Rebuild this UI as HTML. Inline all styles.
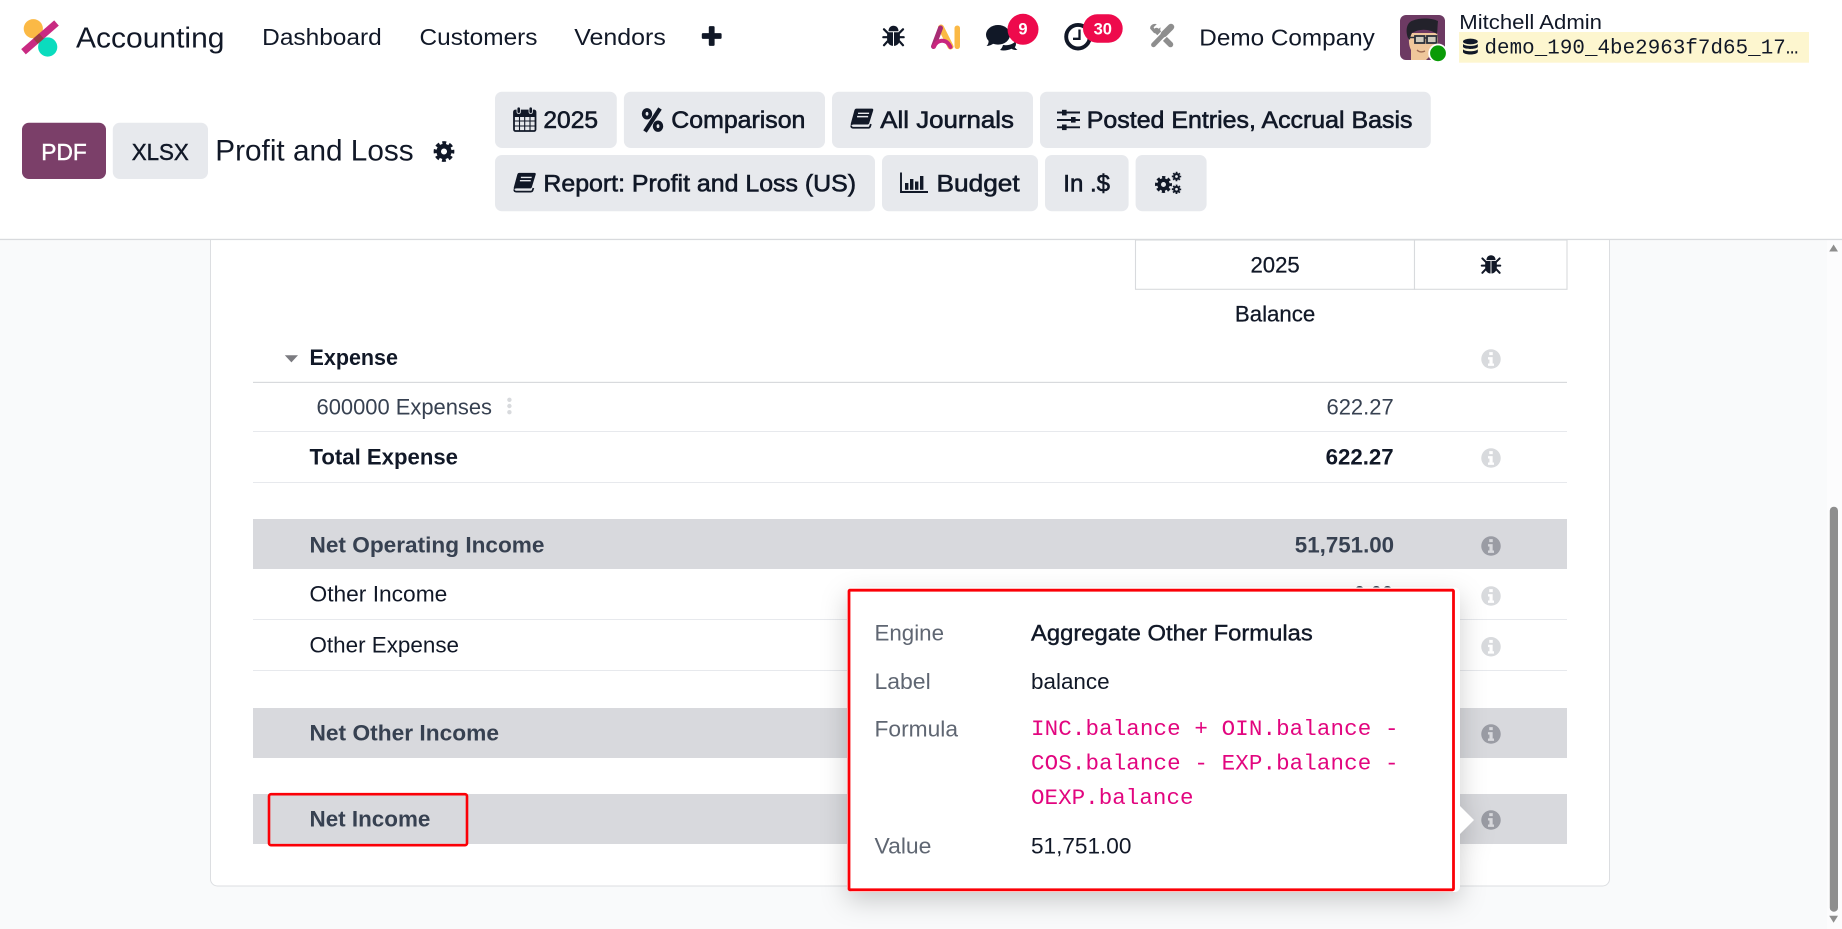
<!DOCTYPE html>
<html lang="en">
<head>
<meta charset="utf-8">
<title>Profit and Loss</title>
<style>
html,body{margin:0;padding:0;width:1842px;height:929px;overflow:hidden;background:#fff}
svg{display:block;position:absolute;left:0;top:0}
text{font-family:"Liberation Sans",sans-serif;fill:#111827;white-space:pre}
.nav{font-size:23.5px;fill:#111827}
.btn{font-size:24px;fill:#111827;stroke:#111827;stroke-width:.6px}
.t{font-size:22px;fill:#111827}
.tm{font-size:22px;fill:#111827;stroke:#111827;stroke-width:.25px}
.n{font-size:22px;fill:#374151}
.b{font-size:22px;font-weight:700;fill:#111827}
.bb{font-size:22px;font-weight:700;fill:#374151}
.lab{font-size:22px;fill:#5f6672}
.code{font-family:"Liberation Mono",monospace;font-size:22.5px;fill:#e2057f}
.badge{font-size:16.5px;font-weight:700;fill:#fff}
</style>
</head>
<body>
<svg width="1842" height="929" viewBox="0 0 1842 929" xmlns="http://www.w3.org/2000/svg">
<defs>
<symbol id="bug" viewBox="0 0 22 22" overflow="visible">
  <path d="M6 6.2C6 2.8 8.2.8 11 .8s5 2 5 5.4z" fill="#111827"/>
  <path d="M4.6 7.2h5.9v13.7C7 20.7 4.6 18 4.6 14zM11.500 7.2h5.900V14c0 4-2.400 6.700-5.900 6.900z" fill="#111827"/>
  <path d="M1.500 4.300 5 7.800M20.500 4.300 17 7.800M.8 12.200H5M21.200 12.200H17M1.500 20.200 5 16.400M20.500 20.200 17 16.400" stroke="#111827" stroke-width="2.200" fill="none" stroke-linecap="round"/>
</symbol>
<symbol id="info" viewBox="0 0 20 20" overflow="visible">
  <path fill-rule="evenodd" d="M10 0a10 10 0 1 1 0 20a10 10 0 1 1 0-20zM8.2 2.9v3.1h3.6V2.9zM6.9 8v2.4h1.5v4.2H6.9V17h6.2v-2.4h-1.4V8z"/>
</symbol>
<symbol id="book" viewBox="0 0 24 21" overflow="visible">
  <path d="M6.500.4H22.500C23.500.4 24 1.200 23.700 2.200L19.600 15.400C19.300 16.300 18.800 16.600 18 16.600H4C2.500 16.600 1.500 17 1 18C.6 16.500.8 15.500 1.200 14.300L4.500 2.200C4.800 1 5.500.4 6.500.4z" fill="#111827"/>
  <path d="M1.400 17.800C1 19.300 2 20 3.500 20H18.600C19.600 20 20.200 19.500 20.500 18.600L21.300 16.200" fill="none" stroke="#111827" stroke-width="1.800"/>
  <path d="M8.200 5.200H19.500M7.200 8.600H18.500" stroke="#e7e9ed" stroke-width="1.500"/>
</symbol>
<symbol id="gear" viewBox="-12 -12 24 24" overflow="visible">
  <circle r="5.800" fill="none" stroke="#111827" stroke-width="5"/>
  <circle r="9.400" fill="none" stroke="#111827" stroke-width="3.800" stroke-dasharray="4.200 3.180" stroke-dashoffset="2.100"/>
</symbol>
</defs>

<!-- ===== page background ===== -->
<rect x="0" y="0" width="1842" height="929" fill="#f9fafb"/>
<rect x="1827" y="240" width="15" height="689" fill="#fcfcfd"/>

<!-- ===== report card ===== -->
<rect x="210.500" y="180" width="1399" height="706" rx="7" fill="#fff" stroke="#dcdee1" stroke-width="1"/>

<!-- header cells -->
<rect x="1135.500" y="240" width="279" height="49.300" fill="#fff" stroke="#d8dadd" stroke-width="1.100"/>
<rect x="1414.500" y="240" width="152.500" height="49.300" fill="#fff" stroke="#d8dadd" stroke-width="1.100"/>
<text class="tm" x="1250.500" y="272.300" textLength="49.200" lengthAdjust="spacingAndGlyphs">2025</text>
<use href="#bug" x="1481" y="254.500" width="20" height="20"/>
<text class="tm" x="1234.900" y="321.700" textLength="80.400" lengthAdjust="spacingAndGlyphs">Balance</text>

<!-- Expense -->
<path d="M284.800 355.200H298L291.400 362.400z" fill="#7b7b80"/>
<text class="b" x="309.500" y="365" textLength="88.500" lengthAdjust="spacingAndGlyphs">Expense</text>
<use href="#info" x="1481" y="349.300" width="20" height="19.500" fill="#d8dadd"/>
<rect x="253" y="381.800" width="1314" height="1.200" fill="#d8dadd"/>

<text class="n" x="316.500" y="414.300" textLength="175.500" lengthAdjust="spacingAndGlyphs">600000 Expenses</text>
<circle cx="509.400" cy="399.800" r="2.200" fill="#d8dadd"/>
<circle cx="509.400" cy="406" r="2.200" fill="#d8dadd"/>
<circle cx="509.400" cy="412.200" r="2.200" fill="#d8dadd"/>
<text class="n" x="1326.500" y="414.300" textLength="67.200" lengthAdjust="spacingAndGlyphs">622.27</text>
<rect x="253" y="431" width="1314" height="1" fill="#e7e9ed"/>

<text class="b" x="309.500" y="464.300" textLength="148.500" lengthAdjust="spacingAndGlyphs">Total Expense</text>
<text class="b" x="1325.600" y="464.300" textLength="68.100" lengthAdjust="spacingAndGlyphs">622.27</text>
<use href="#info" x="1481" y="448.300" width="20" height="19.500" fill="#d8dadd"/>
<rect x="253" y="482" width="1314" height="1" fill="#e7e9ed"/>

<!-- Net Operating Income -->
<rect x="253" y="519" width="1314" height="50" fill="#d8d9dd"/>
<text class="bb" x="309.500" y="552.300" textLength="235" lengthAdjust="spacingAndGlyphs">Net Operating Income</text>
<text class="bb" x="1294.800" y="552.300" textLength="99.300" lengthAdjust="spacingAndGlyphs">51,751.00</text>
<use href="#info" x="1481" y="536.300" width="20" height="19.500" fill="#9a9ca4"/>

<!-- Other Income -->
<text class="t" x="309.500" y="601.700" textLength="137.800" lengthAdjust="spacingAndGlyphs">Other Income</text>
<text class="n" x="1354" y="601.700" textLength="39" lengthAdjust="spacingAndGlyphs">0.00</text>
<use href="#info" x="1481" y="586.300" width="20" height="19.500" fill="#d8dadd"/>
<rect x="253" y="619" width="1314" height="1" fill="#e7e9ed"/>

<!-- Other Expense -->
<text class="t" x="309.500" y="652.700" textLength="149.500" lengthAdjust="spacingAndGlyphs">Other Expense</text>
<use href="#info" x="1481" y="637" width="20" height="19.500" fill="#d8dadd"/>
<rect x="253" y="670" width="1314" height="1" fill="#e7e9ed"/>

<!-- Net Other Income -->
<rect x="253" y="708" width="1314" height="50" fill="#d8d9dd"/>
<text class="bb" x="309.500" y="740.700" textLength="189.500" lengthAdjust="spacingAndGlyphs">Net Other Income</text>
<use href="#info" x="1481" y="724.300" width="20" height="19.500" fill="#9a9ca4"/>

<!-- Net Income -->
<rect x="253" y="794" width="1314" height="50" fill="#d8d9dd"/>
<text class="bb" x="309.500" y="826.700" textLength="120.900" lengthAdjust="spacingAndGlyphs">Net Income</text>
<use href="#info" x="1481" y="810.300" width="20" height="19.500" fill="#9a9ca4"/>
<rect x="269" y="794.200" width="198" height="51" rx="2" fill="none" stroke="#fb0007" stroke-width="2.600"/>

<!-- ===== popover ===== -->
<g style="filter:drop-shadow(0 9px 13px rgba(0,0,0,.19))">
  <path d="M852 587.500H1455a5 5 0 0 1 5 5V806L1474 820L1460 834V887a5 5 0 0 1-5 5H852a5 5 0 0 1-5-5V592.500a5 5 0 0 1 5-5z" fill="#fff"/>
</g>
<rect x="849" y="590.200" width="604.500" height="299.600" rx="1" fill="none" stroke="#fb0007" stroke-width="2.800"/>

<text class="lab" x="874.500" y="640.700" textLength="69.500" lengthAdjust="spacingAndGlyphs">Engine</text>
<text class="t" x="1031" y="640.700" textLength="281.800" lengthAdjust="spacingAndGlyphs" style="stroke:#111827;stroke-width:.4px">Aggregate Other Formulas</text>
<text class="lab" x="874.500" y="689" textLength="56.200" lengthAdjust="spacingAndGlyphs">Label</text>
<text class="t" x="1031" y="689" textLength="78.600" lengthAdjust="spacingAndGlyphs">balance</text>
<text class="lab" x="874.500" y="736.700" textLength="83.500" lengthAdjust="spacingAndGlyphs">Formula</text>
<text class="code" x="1031" y="735" textLength="367.500">INC.balance + OIN.balance -</text>
<text class="code" x="1031" y="769.500" textLength="367.500">COS.balance - EXP.balance -</text>
<text class="code" x="1031" y="804" textLength="162.500">OEXP.balance</text>
<text class="lab" x="874.500" y="853.300" textLength="56.900" lengthAdjust="spacingAndGlyphs">Value</text>
<text class="t" x="1031" y="853.300" textLength="100.400" lengthAdjust="spacingAndGlyphs">51,751.00</text>

<!-- ===== scrollbar ===== -->
<path d="M1833.600 244.500L1838 251.500H1829.200z" fill="#8e8e8e"/>
<rect x="1829.800" y="506.700" width="8.200" height="405" rx="4" fill="#8e8e8e"/>
<path d="M1829.200 915.800H1838L1833.600 922.800z" fill="#8e8e8e"/>

<!-- ===== top bar + control panel ===== -->
<rect x="0" y="0" width="1842" height="239" fill="#fff"/>
<rect x="0" y="238.800" width="1842" height="1.300" fill="#d8dadd"/>

<!-- logo -->
<circle cx="33.300" cy="28.700" r="9.600" fill="#fbb945"/>
<circle cx="47.700" cy="47" r="9.600" fill="#0bdcbe"/>
<path d="M23.500 51.800L56.500 23" stroke="#c92a82" stroke-width="7" fill="none"/>
<path d="M35.500 41.300L41.500 36" stroke="#8a4030" stroke-width="7" fill="none" opacity=".75"/>
<text x="76" y="47.300" style="font-size:29px" textLength="148.500" lengthAdjust="spacingAndGlyphs">Accounting</text>

<!-- nav -->
<text class="nav" x="262.200" y="45" textLength="119.500" lengthAdjust="spacingAndGlyphs">Dashboard</text>
<text class="nav" x="419.500" y="45" textLength="118" lengthAdjust="spacingAndGlyphs">Customers</text>
<text class="nav" x="574.300" y="45" textLength="91.500" lengthAdjust="spacingAndGlyphs">Vendors</text>
<path d="M708.800 27.300a1.200 1.200 0 0 1 1.200-1.200h3.400a1.200 1.200 0 0 1 1.200 1.200v5.800h5.800a1.200 1.200 0 0 1 1.200 1.200v3.400a1.200 1.200 0 0 1-1.200 1.200h-5.800v5.800a1.200 1.200 0 0 1-1.200 1.200H710a1.200 1.200 0 0 1-1.200-1.200v-5.800H703a1.200 1.200 0 0 1-1.200-1.200v-3.400a1.200 1.200 0 0 1 1.200-1.200h5.800z" fill="#111827"/>

<!-- right icons -->
<use href="#bug" x="882.500" y="25" width="22" height="22"/>

<!-- AI logo -->
<path d="M941 27.500L950.500 46.500" stroke="#fbb945" stroke-width="6" stroke-linecap="round" fill="none"/>
<path d="M940.500 28L933.500 46.500" stroke="#a82c74" stroke-width="5" stroke-linecap="round" fill="none"/>
<path d="M934 46.500C937 40 946 37.500 950.500 47" stroke="#c9257f" stroke-width="4" stroke-linecap="round" fill="none"/>
<rect x="954.500" y="25.500" width="5.500" height="23.500" rx="2.700" fill="#fbb945"/>

<!-- chat -->
<path d="M1000 50c1.500-1.500 2.500-3 3-5 6 .8 10.500-1 12.500-4 .7 2.500.7 4.700-.7 6.300.7 1 1.400 1.700 2.700 2.700-2.500 0-4.500-.3-6-1.300-3.500 1.500-7.500 2.300-11.500 1.300z" fill="#111827"/>
<ellipse cx="998" cy="34.800" rx="12" ry="9.800" fill="#111827"/>
<path d="M988.500 40c.3 2.500-.2 4.300-2 6 3-.2 5.500-1 7.500-3z" fill="#111827"/>
<circle cx="1023" cy="29.300" r="15.500" fill="#ee0a4c"/>
<text class="badge" x="1023" y="34.500" text-anchor="middle">9</text>

<!-- clock -->
<circle cx="1078" cy="36.700" r="11.800" fill="#fff" stroke="#111827" stroke-width="3.900"/>
<path d="M1079.500 29.500V38.800H1073" fill="none" stroke="#111827" stroke-width="2.300"/>
<rect x="1083" y="14.300" width="39.700" height="28.400" rx="14.200" fill="#ee0a4c"/>
<text class="badge" x="1102.800" y="34.500" text-anchor="middle">30</text>

<!-- tools -->
<path d="M1156.500 30.500L1170.500 44.500" stroke="#8e8e8e" stroke-width="5.500" stroke-linecap="round" fill="none"/>
<path d="M1150.200 28.800C1149.600 25.500 1153 23 1156.800 24.100L1153.600 27.300 1154.800 29.600 1157.300 30.200 1160.400 27.200C1161 31 1157.800 34.200 1154 33z" fill="#8e8e8e"/>
<path d="M1171 27L1153.500 44.800" stroke="#fff" stroke-width="8" fill="none"/>
<path d="M1171 27L1164 34" stroke="#8e8e8e" stroke-width="6.500" stroke-linecap="round" fill="none"/>
<path d="M1164 34L1153.500 44.800" stroke="#8e8e8e" stroke-width="4.800" stroke-linecap="round" fill="none"/>

<text class="nav" x="1199.300" y="45.700" textLength="175.500" lengthAdjust="spacingAndGlyphs">Demo Company</text>

<!-- avatar -->
<clipPath id="avc"><rect x="1400" y="15" width="45" height="45" rx="6"/></clipPath>
<g clip-path="url(#avc)">
  <rect x="1400" y="15" width="45" height="45" fill="#6d3a63"/>
  <path d="M1411 60V50C1409 46 1408 40 1410 33H1437C1439 40 1438 50 1432 54L1426 60z" fill="#efc79b"/>
  <path d="M1408 38C1405 30 1407 22 1413 20.500C1420 17.500 1432 18 1438 21C1437.500 25 1437.500 30 1437 34C1430 29 1420 28 1412 33C1411 35 1410 37 1410 40z" fill="#23222b"/>
  <rect x="1415" y="36" width="9.500" height="7" fill="#cfcabb" stroke="#2a303a" stroke-width="1.800"/>
  <rect x="1427" y="36" width="9.500" height="7" fill="#cfcabb" stroke="#2a303a" stroke-width="1.800"/>
  <path d="M1424 38H1427M1409 37.500H1415" stroke="#2a303a" stroke-width="1.600"/>
  <path d="M1417 50C1419 52 1422 52.500 1425 51" stroke="#9c6a52" stroke-width="1.300" fill="none"/>
</g>
<circle cx="1438" cy="53.300" r="8.800" fill="#0a9b07" stroke="#fff" stroke-width="1.800"/>

<text x="1459.300" y="28.800" style="font-size:20.500px" textLength="142.700" lengthAdjust="spacingAndGlyphs">Mitchell Admin</text>
<rect x="1459" y="32" width="350" height="30.700" fill="#fdf6cf"/>
<!-- database icon -->
<g fill="#111827">
  <ellipse cx="1470.400" cy="41.500" rx="7.400" ry="2.900"/>
  <path d="M1463 43.900C1465 46.600 1475.800 46.600 1477.800 43.900V47C1475.800 49.600 1465 49.600 1463 47z"/>
  <path d="M1463 49.200C1465 51.900 1475.800 51.900 1477.800 49.200V52.200C1475.800 55.200 1465 55.200 1463 52.200z"/>
</g>
<text x="1484.500" y="53.300" style="font-family:'Liberation Mono',monospace;font-size:20.800px" textLength="313.800">demo_190_4be2963f7d65_17…</text>

<!-- control panel buttons -->
<rect x="22" y="122.700" width="84" height="56.300" rx="7" fill="#7b3f69"/>
<text x="41.300" y="160" style="font-size:23px;fill:#fff;stroke:#fff;stroke-width:.45px" textLength="45.400" lengthAdjust="spacingAndGlyphs">PDF</text>
<rect x="112.800" y="122.700" width="95.200" height="56.300" rx="7" fill="#e7e9ed"/>
<text x="131.700" y="160" style="font-size:23px;stroke:#111827;stroke-width:.45px" textLength="57.100" lengthAdjust="spacingAndGlyphs">XLSX</text>
<text x="215.300" y="160.700" style="font-size:29.500px" textLength="198.300" lengthAdjust="spacingAndGlyphs">Profit and Loss</text>
<use href="#gear" x="433" y="140.500" width="22" height="22"/>

<!-- row 1 -->
<rect x="495" y="91.700" width="121.800" height="56.300" rx="7" fill="#e7e9ed"/>
<rect x="623.900" y="91.700" width="201.100" height="56.300" rx="7" fill="#e7e9ed"/>
<rect x="832" y="91.700" width="201" height="56.300" rx="7" fill="#e7e9ed"/>
<rect x="1040" y="91.700" width="390.800" height="56.300" rx="7" fill="#e7e9ed"/>
<!-- row 2 -->
<rect x="495" y="155" width="380" height="56.300" rx="7" fill="#e7e9ed"/>
<rect x="882" y="155" width="156" height="56.300" rx="7" fill="#e7e9ed"/>
<rect x="1045" y="155" width="83.600" height="56.300" rx="7" fill="#e7e9ed"/>
<rect x="1135.600" y="155" width="71" height="56.300" rx="7" fill="#e7e9ed"/>

<!-- calendar -->
<g fill="none" stroke="#111827">
  <rect x="514" y="110.500" width="21.500" height="20.500" rx="1.500" stroke-width="1.800"/>
  <path d="M514 116.500H535.500M514 121H535.500M514 126H535.500M519.500 116.500V131M524.700 116.500V131M530 116.500V131" stroke-width="1.100"/>
</g>
<rect x="514" y="110" width="21.500" height="6.500" fill="#111827"/>
<rect x="517" y="107" width="3.400" height="6.500" rx="1.600" fill="#111827" stroke="#e7e9ed" stroke-width=".8"/>
<rect x="529" y="107" width="3.400" height="6.500" rx="1.600" fill="#111827" stroke="#e7e9ed" stroke-width=".8"/>
<text class="btn" x="543.400" y="127.800" textLength="54.600" lengthAdjust="spacingAndGlyphs">2025</text>

<!-- percent -->
<g fill="none" stroke="#111827" stroke-width="3.800">
  <ellipse cx="647" cy="113.800" rx="3.300" ry="3.800"/>
  <ellipse cx="658" cy="126.200" rx="3.300" ry="3.800"/>
</g>
<path d="M660 108.500L645 131.500" stroke="#111827" stroke-width="4.200" fill="none"/>
<text class="btn" x="671.300" y="127.800" textLength="134.100" lengthAdjust="spacingAndGlyphs">Comparison</text>

<use href="#book" x="850" y="108" width="23.500" height="21"/>
<text class="btn" x="880.300" y="127.800" textLength="133.700" lengthAdjust="spacingAndGlyphs">All Journals</text>

<!-- sliders -->
<g stroke="#111827" fill="#111827">
  <path d="M1057 112.500H1080M1057 120H1080M1057 127.300H1080" stroke-width="1.900" fill="none"/>
  <rect x="1062" y="109.800" width="4.600" height="5.600" stroke="none"/>
  <rect x="1071" y="117" width="4.600" height="5.600" stroke="none"/>
  <rect x="1062" y="124.500" width="4.600" height="5.600" stroke="none"/>
</g>
<text class="btn" x="1086.800" y="127.800" textLength="325.700" lengthAdjust="spacingAndGlyphs">Posted Entries, Accrual Basis</text>

<use href="#book" x="513" y="172" width="23" height="21"/>
<text class="btn" x="543.400" y="191.700" textLength="312.600" lengthAdjust="spacingAndGlyphs">Report: Profit and Loss (US)</text>

<!-- bar chart -->
<path d="M901 172.500V192H928" fill="none" stroke="#111827" stroke-width="1.900"/>
<g fill="#111827">
  <rect x="905" y="183" width="3.400" height="6.800"/>
  <rect x="910" y="179" width="3.400" height="10.800"/>
  <rect x="915" y="181.500" width="3.400" height="8.300"/>
  <rect x="920" y="176" width="3.400" height="13.800"/>
</g>
<text class="btn" x="936.500" y="191.700" textLength="83.200" lengthAdjust="spacingAndGlyphs">Budget</text>

<text class="btn" x="1063.300" y="191.700" textLength="46.700" lengthAdjust="spacingAndGlyphs">In .$</text>

<use href="#gear" x="1154.500" y="175.500" width="18" height="18"/>
<use href="#gear" x="1171.500" y="171.500" width="10" height="10"/>
<use href="#gear" x="1171.500" y="184.300" width="10" height="10"/>
</svg>
</body>
</html>
